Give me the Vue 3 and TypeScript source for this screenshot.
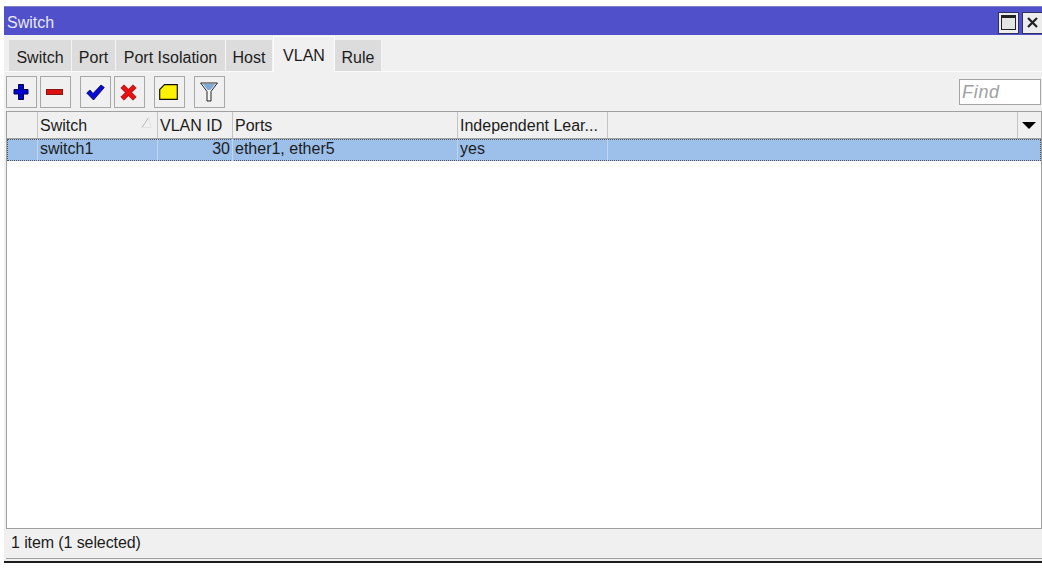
<script setup lang="ts">
const tabs = [
  { label: 'Switch', width: 63 },
  { label: 'Port', width: 44 },
  { label: 'Port Isolation', width: 110 },
  { label: 'Host', width: 47 },
  { label: 'VLAN', width: 62 },
  { label: 'Rule', width: 47 },
]
const activeTab = 'VLAN'
</script>

<template>
  <div class="window">
    <div class="titlebar">
      <span class="title">Switch</span>
      <div class="winbtns">
        <button class="winbtn"><span class="maxicon"></span></button>
        <button class="winbtn close">
          <svg width="13" height="13" viewBox="0 0 13 13"><path d="M2 2 L11 11 M11 2 L2 11" stroke="#222" stroke-width="2.2" fill="none" /></svg>
        </button>
      </div>
    </div>
    <div class="tabs">
      <div
        v-for="t in tabs"
        :key="t.label"
        class="tab"
        :class="{ active: t.label === activeTab }"
        :style="{ width: t.width + 'px' }"
      >{{ t.label }}</div>
    </div>
    <div class="toolbar">
      <button class="tool">
        <svg class="nudge" width="16" height="18" viewBox="0 0 16 18"><path d="M5.5 1.5 H10.5 V6.5 H15 V11 H10.5 V16.5 H5.5 V11 H1 V6.5 H5.5 Z" fill="#0000d0" stroke="#00004a" stroke-width="1" /></svg>
      </button>
      <button class="tool">
        <svg class="nudge" width="17" height="18" viewBox="0 0 17 18"><rect x="0.5" y="6.5" width="16" height="5" fill="#e01010" stroke="#8a1818" stroke-width="1" /></svg>
      </button>
      <button class="tool gap">
        <svg width="19" height="17" viewBox="0 0 19 17"><path d="M0.7 9 L4 6 L7 9.5 L15 1 L18.3 3.5 L7.5 16 Z" fill="#0a0ad8" stroke="#00004a" stroke-width="0.8" /></svg>
      </button>
      <button class="tool">
        <svg class="nudge" width="17" height="17" viewBox="0 0 17 17"><path d="M0.8 4 L4 0.8 L8.5 5.3 L13 0.8 L16.2 4 L11.7 8.5 L16.2 13 L13 16.2 L8.5 11.7 L4 16.2 L0.8 13 L5.3 8.5 Z" fill="#e81010" stroke="#8a1010" stroke-width="0.7" /></svg>
      </button>
      <button class="tool gap">
        <svg class="nudge" width="19" height="16" viewBox="0 0 19 16"><path d="M0.7 15.3 V5.5 L5.5 0.7 H18.3 V15.3 Z" fill="#fff200" stroke="#111" stroke-width="1.2" stroke-linejoin="miter" /></svg>
      </button>
      <button class="tool gap">
        <svg class="nudge" width="18" height="20" viewBox="0 0 18 20">
          <path d="M0.6 1 H17.4 L11 9.5 V19 H7 V9.5 Z" fill="#f4f6f8" stroke="#222" stroke-width="1" />
          <path d="M2.8 2 H15.2 L10.5 8 H7.5 Z" fill="#7fa8d6" />
        </svg>
      </button>
      <div class="find">Find</div>
    </div>
    <div class="table">
      <div class="row head">
        <div class="cell c0"></div>
        <div class="cell c1">Switch<svg class="sort" width="11" height="11" viewBox="0 0 11 11"><path d="M1 10.5 L7.5 0.5" fill="none" stroke="#b8b8b8" stroke-width="1" /><path d="M7.5 0.5 L10 10.5 H1" fill="none" stroke="#e2e2e2" stroke-width="1" /></svg></div>
        <div class="cell c2">VLAN ID</div>
        <div class="cell c3">Ports</div>
        <div class="cell c4">Independent Lear...</div>
        <div class="cell c5"></div>
        <div class="cell c6"><span class="caret"></span></div>
      </div>
      <div class="row data">
        <div class="cell c0"></div>
        <div class="cell c1">switch1</div>
        <div class="cell c2 right">30</div>
        <div class="cell c3">ether1, ether5</div>
        <div class="cell c4">yes</div>
        <div class="cell grow"></div>
      </div>
      <div class="empty"></div>
    </div>
    <div class="status">1 item (1 selected)</div>
  </div>
</template>

<style>
html, body { background: #fff; }
</style>

<style scoped>
.window {
  width: 1038px;
  height: 557px;
  margin: 6px 0 0 4px;
  box-sizing: border-box;
  display: flex;
  flex-direction: column;
  background: #f0f0f0;
  border-bottom: 2px solid #1c1c1c;
  padding-bottom: 2px;
  font-family: "Liberation Sans", Arial, sans-serif;
  font-size: 16px;
  color: #1c1c1c;
}
.titlebar {
  height: 29px;
  flex: none;
  box-sizing: border-box;
  border-top: 1px solid #8080c8;
  background: #4f50ca;
  display: flex;
  align-items: center;
  justify-content: space-between;
}
.title {
  margin-left: 3px;
  padding-top: 3px;
  color: #e8e8f8;
  line-height: 28px;
}
.winbtns {
  display: flex;
  gap: 3px;
  margin-top: 3px;
}
.winbtn {
  width: 21px;
  height: 22px;
  padding: 0;
  box-sizing: border-box;
  border: 1px solid #303060;
  background: #ececec;
  display: flex;
  align-items: center;
  justify-content: center;
}
.winbtn.close {
  width: 20px;
  border-right: 0;
}
.maxicon {
  display: block;
  width: 15px;
  height: 15px;
  box-sizing: border-box;
  border: 1px solid #222;
  border-top-width: 3px;
  background: #e4e4e4;
}
.tabs {
  height: 37px;
  flex: none;
  box-sizing: border-box;
  display: flex;
  align-items: flex-end;
  padding: 0 0 0 5px;
  border-bottom: 1px solid #fbfbfb;
}
.tab {
  height: 31px;
  line-height: 35px;
  box-sizing: border-box;
  background: #dcdcdc;
  border-right: 1px solid #f4f4f4;
  white-space: nowrap;
  text-align: center;
  flex: none;
}
.tab.active {
  height: 36px;
  line-height: 37px;
  background: #f0f0f0;
  border-top: 1px solid #fbfbfb;
  border-left: 1px solid #fbfbfb;
  border-right: 1px solid #fbfbfb;
  margin-bottom: -1px;
}
.toolbar {
  height: 39px;
  flex: none;
  box-sizing: border-box;
  display: flex;
  align-items: flex-start;
  gap: 3px;
  padding: 4px 1px 0 2px;
}
.tool {
  width: 31px;
  height: 32px;
  padding: 0;
  box-sizing: border-box;
  background: #f0f0f0;
  border: 1px solid #a8a8a8;
  display: flex;
  align-items: center;
  justify-content: center;
}
.tool.gap { margin-left: 6px; }
.nudge { margin-right: 2px; }
.find {
  margin-left: auto;
  margin-top: 3px;
  width: 82px;
  height: 26px;
  box-sizing: border-box;
  background: #fff;
  border: 1px solid #a4a4a4;
  color: #a0a0a0;
  font-style: italic;
  font-size: 18px;
  letter-spacing: 0.7px;
  line-height: 24px;
  padding-left: 2px;
}
.table {
  flex: 1;
  min-height: 0;
  display: flex;
  flex-direction: column;
  margin: 0 0 0 2px;
  border: 1px solid #a0a0a0;
  background: #fff;
}
.row {
  display: flex;
  flex: none;
}
.head {
  height: 26px;
  background: #f0f0f0;
  border-bottom: 1px solid #a0a0a0;
}
.data {
  height: 22px;
  background: #9cc0ea;
  box-sizing: border-box;
  outline: 1px dotted #555;
  outline-offset: -1px;
}
.cell {
  flex: none;
  box-sizing: border-box;
  position: relative;
  padding: 0 2px;
  line-height: 27px;
  white-space: nowrap;
  border-right: 1px solid #c4c4c4;
}
.data .cell {
  line-height: 19px;
  border-right-color: #c0d4ee;
}
.c0 { width: 31px; }
.c1 { width: 120px; }
.c2 { width: 75px; }
.c3 { width: 225px; }
.c4 { width: 150px; }
.c5 { width: 410px; }
.c6 { width: 22px; border-right: 0; display: flex; align-items: center; justify-content: center; }
.grow { flex: 1; border-right: 0; }
.right { text-align: right; }
.sort {
  position: absolute;
  right: 5px;
  top: 5px;
}
.caret {
  width: 0;
  height: 0;
  border-left: 7px solid transparent;
  border-right: 7px solid transparent;
  border-top: 7px solid #000;
  display: block;
}
.empty { flex: 1; }
.status {
  height: 30px;
  flex: none;
  box-sizing: border-box;
  padding-left: 5px;
  margin: 0 0 0 2px;
  letter-spacing: -0.1px;
  line-height: 27px;
  border-bottom: 1px solid #a0a0a0;
}
</style>
